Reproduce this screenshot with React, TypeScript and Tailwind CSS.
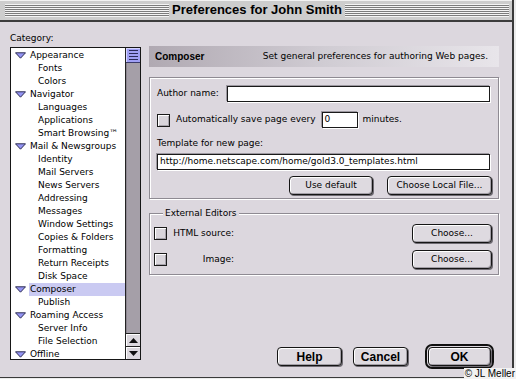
import React from "react";

type Item = { label: string; parent?: boolean; selected?: boolean };

const categories: Item[] = [
  { label: "Appearance", parent: true },
  { label: "Fonts" },
  { label: "Colors" },
  { label: "Navigator", parent: true },
  { label: "Languages" },
  { label: "Applications" },
  { label: "Smart Browsing™" },
  { label: "Mail & Newsgroups", parent: true },
  { label: "Identity" },
  { label: "Mail Servers" },
  { label: "News Servers" },
  { label: "Addressing" },
  { label: "Messages" },
  { label: "Window Settings" },
  { label: "Copies & Folders" },
  { label: "Formatting" },
  { label: "Return Receipts" },
  { label: "Disk Space" },
  { label: "Composer", parent: true, selected: true },
  { label: "Publish" },
  { label: "Roaming Access", parent: true },
  { label: "Server Info" },
  { label: "File Selection" },
  { label: "Offline", parent: true },
];

const stripes =
  "flex-1 h-[13px] bg-[image:repeating-linear-gradient(to_bottom,#f4f4f4_0px,#f4f4f4_1px,#7c7c7c_1px,#7c7c7c_2px)] border-b border-[#f4f4f4]";

const btn =
  "flex items-center justify-center h-[19px] rounded-[4px] border border-[#151515] bg-[#dedae0] shadow-[inset_1px_1px_0_#fff,inset_-1px_-1px_0_#a29ea6,1px_1px_0_#6f6b73]";

const field =
  "h-[16px] border border-[#1a1a1a] bg-white flex items-center pl-[2px] shadow-[1px_1px_0_#fff,-1px_-1px_0_#9c98a0]";

const etched =
  "border border-[#8e8a92] shadow-[inset_1px_1px_0_#fff,1px_1px_0_#fff]";

function Disclosure() {
  return (
    <svg width="11" height="7" viewBox="0 0 11 7" className="shrink-0">
      <polygon points="0.5,0.8 10.5,0.8 5.5,6.2" fill="#9494f4" stroke="#2c2c52" strokeWidth="1" />
    </svg>
  );
}

function Checkbox() {
  return (
    <span className="block w-[13px] h-[13px] shrink-0 border border-[#1a1a1a] bg-[#d9d5db] shadow-[inset_1px_1px_0_#fff,inset_-1px_-1px_0_#a6a2aa]" />
  );
}

function ArrowButton({ up }: { up?: boolean }) {
  return (
    <div className="h-[13px] border-t border-[#222] bg-[#dcd8de] shadow-[inset_1px_1px_0_#fff] flex items-center justify-center">
      <svg width="9" height="5" viewBox="0 0 9 5">
        <polygon points={up ? "0,5 9,5 4.5,0" : "0,0 9,0 4.5,5"} fill="#111" />
      </svg>
    </div>
  );
}

export default function App() {
  return (
    <div className="relative w-[516px] h-[379px] overflow-hidden bg-[#ececec] font-['DejaVu_Sans',sans-serif] text-[9px] text-black">
      <div className="w-[514px] h-[378px] flex flex-col bg-[#dcd7de] border-r-2 border-b border-[#3a3a3a]">
        {/* title bar */}
        <div className="h-[22px] shrink-0 flex items-center pl-[5px] pr-[3px] bg-[#cdcdcd] border-b-2 border-[#3c3c3c] shadow-[inset_0_1px_0_#f2f2f2]">
          <div className={stripes} />
          <span className="px-[3px] font-['Liberation_Sans',sans-serif] font-bold text-[13px] leading-[14px]">
            Preferences for John Smith
          </span>
          <div className={stripes} />
        </div>

        <div className="flex-1 flex">
          {/* category list */}
          <div className="w-[141px] pl-[10px] flex flex-col">
            <div className="pt-[10px] h-[22px] leading-[12px]">Category:</div>
            <div className="mt-[3px] h-[313px] flex border border-[#161616] bg-white">
              <div className="flex-1 flex flex-col pt-px">
                {categories.map((c) => (
                  <div key={c.label} className="h-[13px] flex items-center leading-[13px]">
                    {c.parent ? (
                      <>
                        <span className="w-[18px] pl-[4px] flex items-center">
                          <Disclosure />
                        </span>
                        <span className={`flex-1 pl-[1px] ${c.selected ? "bg-[#cacaf2]" : ""}`}>{c.label}</span>
                      </>
                    ) : (
                      <span className="pl-[27px]">{c.label}</span>
                    )}
                  </div>
                ))}
              </div>
              <div className="w-[15px] flex flex-col border-l border-[#222] bg-[#a59fa8]">
                <div className="h-[15px] bg-[#9f9ff4] border-b border-[#3a3a6a] shadow-[inset_1px_1px_0_#d4d4ff] flex flex-col items-center justify-center gap-[2px]">
                  <span className="block w-[9px] h-px bg-[#2a2a5a]" />
                  <span className="block w-[9px] h-px bg-[#2a2a5a]" />
                  <span className="block w-[9px] h-px bg-[#2a2a5a]" />
                  <span className="block w-[9px] h-px bg-[#2a2a5a]" />
                </div>
                <div className="flex-1 shadow-[inset_1px_0_0_#8c8690]" />
                <ArrowButton up />
                <ArrowButton />
              </div>
            </div>
          </div>

          {/* right panel */}
          <div className="ml-[8px] w-[350px] pt-[24px] flex flex-col">
            <div className="h-[21px] flex items-center justify-between pl-[6px] pr-[11px] bg-linear-to-r from-[#b0a9b2] via-[#d0ccd3] to-[#e8e5ea]">
              <span className="font-['Liberation_Sans',sans-serif] font-bold text-[10px]">Composer</span>
              <span>Set general preferences for authoring Web pages.</span>
            </div>

            <div className={`mt-[10px] ${etched} pt-[8px] pb-[3px] pl-[7px] pr-[8px] flex flex-col`}>
              <div className="h-[16px] flex items-center">
                <span className="w-[70px]">Author name:</span>
                <div className={`flex-1 ${field}`} />
              </div>
              <div className="mt-[10px] h-[16px] flex items-center">
                <Checkbox />
                <span className="ml-[6px]">Automatically save page every</span>
                <div className={`ml-[6px] w-[36px] ${field}`}>0</div>
                <span className="ml-[5px]">minutes.</span>
              </div>
              <div className="mt-[9px] h-[12px] leading-[12px]">Template for new page:</div>
              <div className={`mt-[5px] ${field}`}>http://home.netscape.com/home/gold3.0_templates.html</div>
              <div className="mt-[6px] flex justify-end gap-[14px] -mr-[2px]">
                <div className={`${btn} w-[84px]`}>Use default</div>
                <div className={`${btn} w-[105px]`}>Choose Local File...</div>
              </div>
            </div>

            <fieldset className={`mt-[8px] ${etched} pt-[5px] pb-[5px] pl-[4px] pr-[6px]`}>
              <legend className="ml-[9px] px-[2px] h-[12px] leading-[12px] bg-[#dcd7de]">External Editors</legend>
              <div className="h-[19px] flex items-center">
                <Checkbox />
                <span className="ml-[5px] w-[62px] text-right">HTML source:</span>
                <div className={`${btn} ml-auto w-[80px]`}>Choose...</div>
              </div>
              <div className="mt-[7px] h-[19px] flex items-center">
                <Checkbox />
                <span className="ml-[5px] w-[62px] text-right">Image:</span>
                <div className={`${btn} ml-auto w-[80px]`}>Choose...</div>
              </div>
            </fieldset>

            <div className="mt-auto pb-[8px] pr-[5px] flex items-center justify-end font-['Liberation_Sans',sans-serif] font-bold text-[12px]">
              <div className={`${btn} w-[65px]`}>Help</div>
              <div className={`${btn} ml-[11px] w-[55px]`}>Cancel</div>
              <div className="ml-[17px] border-2 border-[#111] rounded-[7px] p-px">
                <div className={`${btn} w-[63px]`}>OK</div>
              </div>
            </div>
          </div>
        </div>
      </div>
      <span className="absolute right-0 bottom-0 px-px bg-[#f2f2f2] font-['Liberation_Sans',sans-serif] text-[10px] leading-[11px]">
        © JL Meller
      </span>
    </div>
  );
}
